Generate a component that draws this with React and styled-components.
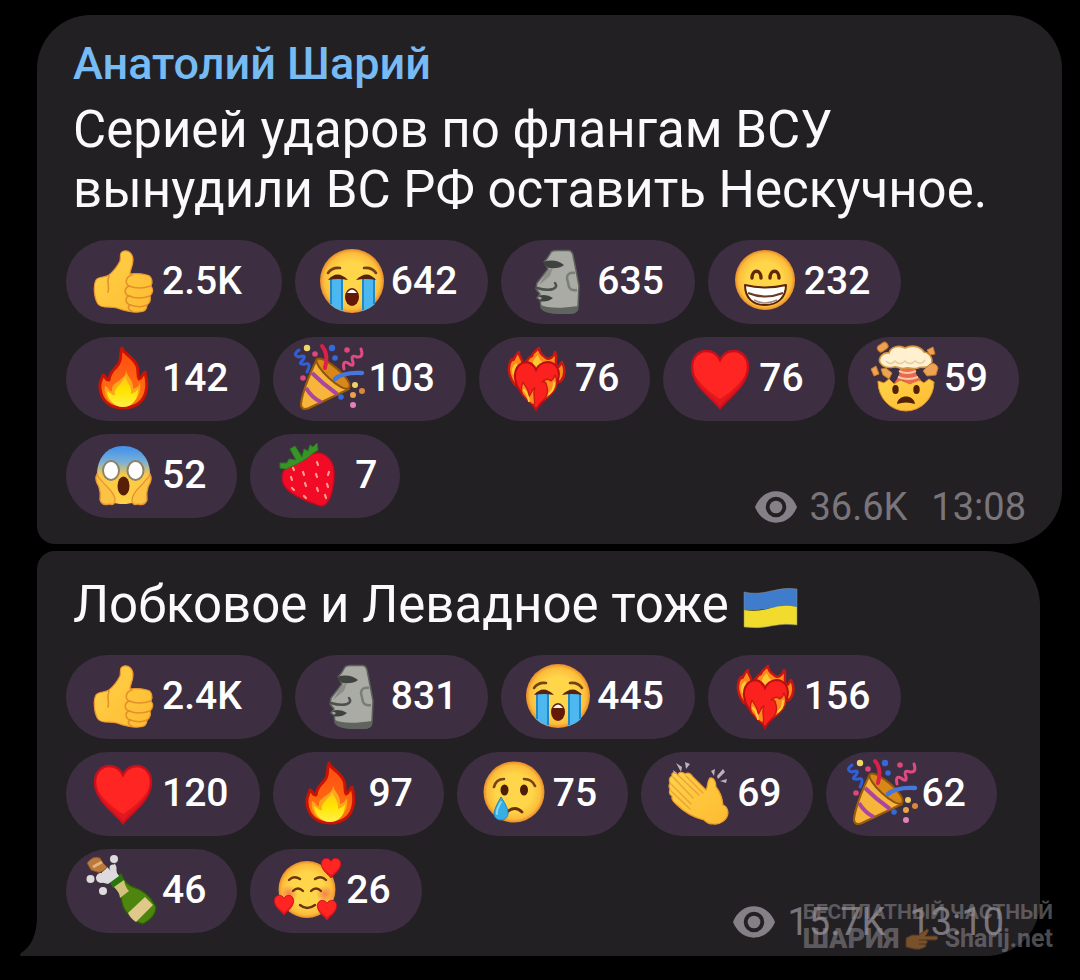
import React from 'react';
import styled, { createGlobalStyle } from 'styled-components';

const GlobalStyle = createGlobalStyle`
  body {
    margin: 0;
    background-color: #000;
    font-family: Roboto, 'Liberation Sans', sans-serif;
  }
`;

const Page = styled.main`
  position: relative;
  box-sizing: border-box;
  min-height: 100vh;
  padding: 15px 18px 24px 37px;
  display: flex;
  flex-direction: column;
  gap: 7px;
`;

const Bubble = styled.article`
  position: relative;
  background-color: #232024;
  padding: ${(props) => (props.$tail ? '24px 36px 11px 29px' : '23px 36px 14px 29px')};
  margin-right: ${(props) => (props.$tail ? '22px' : '0')};
  border-radius: ${(props) => (props.$tail ? '18px 54px 54px 0' : '54px 54px 54px 18px')};
`;

const Tail = styled.svg`
  position: absolute;
  left: -18px;
  bottom: 0;
  width: 19px;
  height: 40px;
`;

const Author = styled.h2`
  margin: 0 7px 10px;
  font-size: 45px;
  font-weight: 500;
  line-height: 52px;
  color: #76bbf3;
`;

const Message = styled.p`
  margin: 0 7px 20px;
  font-size: 51px;
  line-height: 60px;
  color: #fbf9fc;
`;

const FlagIcon = styled.svg`
  width: 58px;
  height: 44px;
  vertical-align: -8px;
`;

const Reactions = styled.div`
  display: flex;
  flex-wrap: wrap;
  gap: 13px;
`;

// abbreviated counts (2.5K) get a roomier right side, single digits a tighter one
const pillEnd = { short: '14px', normal: '31px', long: '40px' };

const Pill = styled.button`
  display: flex;
  align-items: center;
  height: 84px;
  padding: 0 ${(props) => pillEnd[props.$size]} 2px 0;
  border: none;
  border-radius: 42px;
  background-color: #3d2f41;
  color: #fff;
  font-family: inherit;
  font-size: 39px;
  font-weight: 500;
  cursor: pointer;
`;

const Count = styled.span`
  min-width: 40px;
  text-align: center;
`;

const Emoji = styled.svg`
  width: 96px;
  height: 84px;
  margin-bottom: -2px;
  flex: none;
`;

const Meta = styled.footer`
  display: flex;
  align-items: center;
  justify-content: flex-end;
  margin-top: -34px;
  font-size: 38px;
  line-height: 46px;
  color: #79757b;

  time {
    margin-left: 24px;
  }
`;

const EyeIcon = styled.svg`
  width: 42px;
  height: 32px;
  margin-right: 12px;
`;

const Watermark = styled.div`
  position: absolute;
  right: 27px;
  bottom: 27px;
  color: rgba(150, 148, 152, 0.5);
  font-weight: 700;
  font-size: 21px;
  line-height: 25px;
`;

const WatermarkLink = styled.a`
  display: flex;
  align-items: center;
  justify-content: space-between;
  color: inherit;
  text-decoration: none;
  font-size: 25px;
  line-height: 28px;

  strong {
    font-size: 27px;
  }
`;

const PointerIcon = styled.svg`
  width: 34px;
  height: 24px;
`;

// EMOJI PARTS
const Defs = () => (
  <svg width="0" height="0" style={{ position: 'absolute' }} aria-hidden="true">
    <defs>
      <radialGradient id="face">
        <stop offset="0.6" stopColor="#ffd54a" />
        <stop offset="0.88" stopColor="#fbbd3a" />
        <stop offset="1" stopColor="#e98a2c" />
      </radialGradient>
      <linearGradient id="scream" x1="0" y1="0" x2="0" y2="1">
        <stop offset="0.05" stopColor="#4795ea" />
        <stop offset="0.28" stopColor="#7db0d6" />
        <stop offset="0.5" stopColor="#fcc844" />
        <stop offset="1" stopColor="#ffd044" />
      </linearGradient>
      <linearGradient id="flame" x1="0" y1="0" x2="0" y2="1">
        <stop offset="0" stopColor="#ff4a12" />
        <stop offset="1" stopColor="#ff7a10" />
      </linearGradient>
      <linearGradient id="flameCore" x1="0" y1="0" x2="0" y2="1">
        <stop offset="0" stopColor="#ffc21c" />
        <stop offset="0.5" stopColor="#ffe500" />
        <stop offset="1" stopColor="#fff04a" />
      </linearGradient>
      <linearGradient id="hand" x1="0" y1="0" x2="1" y2="1">
        <stop offset="0" stopColor="#ffd24a" />
        <stop offset="1" stopColor="#fdbb30" />
      </linearGradient>
      <radialGradient id="blush">
        <stop offset="0" stopColor="#f5804a" />
        <stop offset="1" stopColor="#f5804a" stopOpacity="0" />
      </radialGradient>
    </defs>
  </svg>
);

const Heart = ({ x, y, size }) => (
  <g transform={`translate(${x} ${y}) scale(${size / 58})`}>
    <path
      d="M0 29C-6 20 -28 7 -28 -12C-28 -22 -21 -28 -14 -28C-8 -28 -3 -25 0 -19C3 -25 8 -28 14 -28C21 -28 28 -22 28 -12C28 7 6 20 0 29Z"
      fill="#ff2522"
      stroke="#c90f1c"
      strokeWidth="2.5"
    />
    <path d="M0 29C-8 19 -25 8 -27 -7C-20 6 -8 15 0 20C8 15 20 6 27 -7C25 8 8 19 0 29Z" fill="#d8141d" opacity="0.75" />
  </g>
);

const Thumb = () => (
  <>
    <path
      d="M58 11C63 10 67 14 67 20C67 26 64 30 64 34C70 33 77 34 81 35C86 36 87 42 85 46C88 50 86 54 84 56C85 60 84 63 81 65C81 70 78 72 73 72C65 73 57 70 51 68C44 66 36 69 32 64C28 58 27 45 30 40C33 36 39 38 43 35C49 30 52 25 54 21C55 17 53 12 58 11Z"
      fill="url(#hand)"
      stroke="#eb9530"
      strokeWidth="1.2"
    />
    <g fill="none" stroke="#e4902b" strokeWidth="1.6" strokeLinecap="round">
      <path d="M43 36C40 42 44 46 42 52" />
      <path d="M66 35C59 37 59 44 63 46C57 49 59 55 63 56C58 58 60 64 64 65C61 67 63 71 66 71" />
      <path d="M63 46C70 49 79 48 85 46M63 56C70 59 78 58 84 56M64 65C70 67 77 67 81 65" />
    </g>
  </>
);

const Sob = () => (
  <>
    <circle cx="57" cy="41" r="32" fill="url(#face)" />
    <path d="M35 38H48V71Q40 69 35 64ZM67 38H80V64Q75 69 67 71Z" fill="#4db7ef" />
    <path d="M36 38V64M47 38V70M68 38V70M79 38V64" stroke="#2387c4" strokeWidth="2" />
    <path d="M33 40Q42 29 53 40Q43 38 33 40ZM81 40Q72 29 61 40Q71 38 81 40Z" fill="#54240c" />
    <path d="M33 33Q37 27 45 28M81 33Q77 27 69 28" fill="none" stroke="#74400f" strokeWidth="2.6" strokeLinecap="round" />
    <ellipse cx="57" cy="57" rx="7" ry="9" fill="#641806" />
    <path d="M52 53Q57 46 62 53Z" fill="#fff" />
  </>
);

const Moai = () => (
  <>
    <path
      d="M50 12Q52 10 57 10.500H68Q71 11 72 15L75 30L78 46L77 67Q77 73 69 73H56Q41 72 40 67L39 60L36 58L39 54L35 49L36 43L47 29L43 22Q47 18 50 12Z"
      fill="#a9aba4"
      stroke="#5c605c"
      strokeWidth="1.500"
      strokeLinejoin="round"
    />
    <path d="M40 65Q50 70 77 66V68Q77 74 69 74H56Q42 73 40 67Z" fill="#60645f" />
    <path d="M42 22Q54 18 63 25Q58 29 48 28Q45 27 42 22Z" fill="#3e433f" />
    <path d="M46 31L52 28L49 36L38 45Z" fill="#8b8e87" />
    <path d="M36 48Q46 51 52 49Q57 47 54 43" fill="none" stroke="#4c514d" strokeWidth="2.500" strokeLinecap="round" />
    <path d="M37 56Q45 53 52 58Q46 63 38 61L41 58Z" fill="#3e433f" />
    <path d="M74 33Q66 32 66 38L68 47Q70 51 76 50" fill="none" stroke="#7a7e78" strokeWidth="2.500" />
  </>
);

const Grin = () => (
  <>
    <circle cx="57" cy="40" r="30" fill="url(#face)" />
    <path d="M44 38C44 29 53 29 53 38M62 38C62 29 71 29 71 38" fill="none" stroke="#612806" strokeWidth="3.400" strokeLinecap="round" />
    <path d="M37 45Q57 50 78 45C78 58 69 65 57 65C45 65 37 58 37 45Z" fill="#fff" stroke="#5a2508" strokeWidth="2" strokeLinejoin="round" />
    <path d="M40 53Q57 60 75 53" fill="none" stroke="#6b3b22" strokeWidth="2" />
    <path d="M46 60Q57 66 69 60" fill="none" stroke="#a58a80" strokeWidth="1.500" />
  </>
);

const Fire = () => (
  <>
    <path
      d="M56 11C56 16 67 19 71 29C73 34 71 39 73 42C77 40 76 37 79 35C80 40 82 46 80 54C78 64 70 71 57 71C43 71 35 63 34 51C33 46 36 42 37 38C40 39 39 43 43 43C44 35 47 34 51 29C57 23 53 16 56 11Z"
      fill="url(#flame)"
      stroke="#c91405"
      strokeWidth="3"
      strokeLinejoin="round"
    />
    <path
      d="M60 33C61 40 68 43 67 52C71 51 73 48 74 46C76 58 68 69 57 69C45 69 37 61 39 49C43 50 43 55 46 54C45 47 51 46 55 42C59 39 60 37 60 33Z"
      fill="#ffa51a"
    />
    <path d="M59 38C60 45 66 48 65 57C68 56 71 54 72 52C72 64 65 70 57 70C48 70 41 62 41 54C45 56 46 59 49 58C47 50 59 46 59 38Z" fill="url(#flameCore)" />
  </>
);

const Party = () => (
  <>
    <path d="M44 22Q30 51 28 67Q28 74 36 71L76 52Z" fill="#f8b53c" stroke="#9b5d0c" strokeWidth="2" strokeLinejoin="round" />
    <path d="M44 22C51 18 82 44 76 51C70 57 39 28 44 22Z" fill="#d98718" stroke="#8f560b" strokeWidth="2" />
    <path d="M39 36Q50 47 64 57M33 51Q39 61 48 65" fill="none" stroke="#a9479e" strokeWidth="4" />
    <path d="M49 9Q56 17 52 31" fill="none" stroke="#dd1f4a" strokeWidth="4" strokeLinecap="round" />
    <path d="M62 42Q70 35 89 36" fill="none" stroke="#4777dd" strokeWidth="4.500" strokeLinecap="round" />
    <path d="M26 13Q19 18 26 20Q34 17 30 23Q24 28 32 27Q39 25 34 35" fill="none" stroke="#315fd6" strokeWidth="3" strokeLinecap="round" />
    <path d="M88 12Q91 21 84 20Q77 17 80 25Q81 31 75 26Q69 23 71 32" fill="none" stroke="#df4a80" strokeWidth="3" strokeLinecap="round" />
    <circle cx="34" cy="11" r="3.200" fill="#f0d56b" />
    <circle cx="42" cy="17" r="2.800" fill="#df477a" />
    <circle cx="59" cy="11" r="3.200" fill="#3569dc" />
    <circle cx="62" cy="21" r="2.800" fill="#3569dc" />
    <circle cx="74" cy="13" r="2.800" fill="#df477a" />
    <circle cx="30" cy="41" r="2.800" fill="#df477a" />
    <circle cx="68" cy="60" r="2.800" fill="#3569dc" />
    <circle cx="82" cy="48" r="3" fill="#f0cf6b" />
    <circle cx="89" cy="54" r="3" fill="#dc853d" />
    <circle cx="80" cy="58" r="3" fill="#eba24b" />
    <circle cx="80" cy="68" r="3" fill="#e281bd" />
  </>
);

const HeartFire = () => (
  <>
    <path
      d="M36 48C29 39 28 29 33 22C35 26 35 18 40 15C39 20 45 22 43 28C49 26 48 20 53 19C54 15 58 13 60 11C60 16 64 19 67 21C70 23 75 20 76 15C79 20 75 25 78 29C81 31 80 28 83 25C85 29 88 36 82 44L58 54Z"
      fill="#ff8a1c"
      stroke="#c81711"
      strokeWidth="2.500"
      strokeLinejoin="round"
    />
    <path d="M34 38Q31 31 37 26Q40 29 38 37ZM54 28Q53 23 59 18Q60 23 65 26L61 31Z" fill="#ffc832" />
    <path
      d="M57 73C53 64 38 58 36 41C35 29 44 23 51 26Q55 28 57 33Q60 26 68 25C77 25 82 33 79 43C75 58 61 64 57 73Z"
      fill="#fb211e"
      stroke="#bb0f13"
      strokeWidth="2"
    />
    <path
      d="M44 45C47 51 51 53 49 60C53 58 52 52 56 51C53 57 57 62 55 68Q49 65 46 60Q40 55 44 45ZM76 38Q80 47 75 54Q70 60 65 63Q70 56 68 50Q67 43 63 45Q68 40 72 44Q75 42 76 38Z"
      fill="#ff8a1e"
      stroke="#c91a10"
      strokeWidth="1.300"
      strokeLinejoin="round"
    />
    <path d="M45 53Q49 57 50 64M75 46Q75 53 70 57" fill="none" stroke="#ffcf3e" strokeWidth="2" strokeLinecap="round" />
  </>
);

const RedHeart = () => <Heart x={57} y={42} size={58} />;

const Exploding = () => (
  <>
    <path d="M30 44L36 46L41 42L46 47L52 43L62 47L70 42L76 46L81 42L86 45A28 29 0 0 1 30 45Z" fill="url(#hand)" stroke="#df922f" />
    <path d="M51 28H68Q65 36 73 43L62 47L54 43L46 46Q54 37 51 28Z" fill="#e76b4c" />
    <path d="M51 34Q59 38 68 34M50 40Q60 44 70 40" fill="none" stroke="#ffc6a5" strokeWidth="2" />
    <path
      d="M34 28C28 23 34 15 41 16C43 9 52 8 57 11C65 7 73 10 76 15C83 16 87 25 81 29C77 32 73 29 70 31C65 33 62 30 58 31C53 33 50 29 46 30C41 31 37 31 34 28Z"
      fill="#fff0cf"
      stroke="#d5953e"
      strokeWidth="1.600"
    />
    <path d="M38 24Q43 29 47 24Q52 29 57 24Q62 29 67 24Q73 29 77 23" fill="none" stroke="#e6cca0" strokeWidth="1.500" />
    <g fill="#eea352" stroke="#c87928">
      <rect x="29" y="7" width="11" height="7" rx="3" transform="rotate(-35 34 10)" />
      <path d="M79 13L85 10L87 17L82 18ZM23 32L28 29L31 37L26 39ZM33 32L38 31L44 36L41 42L35 38ZM75 34L82 27Q88 25 90 31L88 38L79 39Z" />
    </g>
    <ellipse cx="47.500" cy="52.500" rx="3.200" ry="4.500" fill="#512207" />
    <ellipse cx="68.500" cy="52.500" rx="3.200" ry="4.500" fill="#512207" />
    <path d="M49 67C50 57 66 57 67 67Q58 64 49 67Z" fill="#512207" />
  </>
);

const Scream = () => (
  <>
    <path d="M57 12C74 12 84 24 84 41C84 60 74 70 57 70C40 70 31 60 31 41C31 24 41 12 57 12Z" fill="url(#scream)" />
    <ellipse cx="45" cy="36.500" rx="8" ry="9.500" fill="#fff" stroke="#8c8466" strokeWidth="2" />
    <ellipse cx="69.500" cy="36.500" rx="8" ry="9.500" fill="#fff" stroke="#8c8466" strokeWidth="2" />
    <ellipse cx="57.500" cy="52" rx="6" ry="9.500" fill="#572006" />
    <path
      d="M31 40Q28 45 33 53Q35 59 34 66Q36 72 43 70Q49 72 49 66C49 58 40 53 36 47Q32 44 31 40ZM84 40Q87 45 82 53Q80 59 81 66Q79 72 72 70Q66 72 66 66C66 58 75 53 79 47Q83 44 84 40Z"
      fill="#fcc242"
      stroke="#e59436"
      strokeWidth="1.300"
    />
  </>
);

const Strawberry = () => (
  <>
    <path
      d="M66 19C75 18 84 26 84 38C85 51 81 65 76 70Q72 74 65 70C54 67 41 60 36 54C30 47 31 37 38 32C48 27 56 20 66 19Z"
      fill="#f10b26"
      stroke="#b90d20"
      strokeWidth="1.300"
    />
    <path
      d="M40 15L45 12L52 23L54 15L58 17L60 11L63 13L67 9L68 16L62 20Q58 24 54 26L47 30L36 35L30 34L30 29L37 29L39 25L46 26Z"
      fill="#399427"
      stroke="#287a22"
      strokeLinejoin="round"
    />
    <path
      d="M41 43L42 46M42 54L44 56M53 38L54 41M55 49L56 52M54 62L56 64M67 28L68 31M66 40L67 43M67 54L68 57M79 38L78 41M77 50L78 53M75 61L76 64M43 34L44 36"
      stroke="#ffa08c"
      strokeWidth="2.200"
      strokeLinecap="round"
    />
  </>
);

const Cry = () => (
  <>
    <circle cx="57" cy="40" r="30.500" fill="url(#face)" />
    <path d="M37 35Q39 27 47 27M67 27Q75 27 78 34" fill="none" stroke="#79430f" strokeWidth="2.600" strokeLinecap="round" />
    <ellipse cx="47.500" cy="38" rx="4" ry="5.500" fill="#4d1d08" />
    <ellipse cx="67" cy="38" rx="4" ry="5.500" fill="#4d1d08" />
    <path d="M50 60Q58 53 65 60" fill="none" stroke="#67300b" strokeWidth="2.800" strokeLinecap="round" />
    <path d="M44 45Q52 57 51 62C50 70 38 70 37 62Q37 57 44 45Z" fill="#38afe4" stroke="#2588bf" />
    <path d="M44 50Q39 58 40 62" fill="none" stroke="#83daf5" strokeWidth="2" strokeLinecap="round" />
  </>
);

const Clap = () => (
  <>
    <path
      d="M31 24C30 20 34 20 37 23C38 19 42 20 44 22C47 20 50 22 52 25L65 38C67 35 66 29 69 26C73 25 75 30 75 35Q81 42 82 53Q86 54 87 60C87 68 79 73 72 72Q67 72 63 68C51 65 41 58 35 52Q30 48 31 44Q27 42 29 37Q27 34 29 31Q27 26 31 24Z"
      fill="url(#hand)"
      stroke="#eb9a2f"
      strokeWidth="1.200"
    />
    <path d="M32 25L52 46M38 24L58 43M45 24L62 41M30 32L50 52M30 39L49 57" stroke="#eaa238" strokeWidth="1.300" strokeLinecap="round" />
    <path d="M32 18L36 21L33 22ZM35 11L41 15L40 20ZM44 10L49 12L45 17ZM70 19L74 17L73 24ZM82 17L84 20L77 27L76 24ZM79 29L86 27L85 31Z" fill="#bbb2bf" />
  </>
);

const Champagne = () => (
  <>
    <path d="M43 31L55 25Q59 36 70 39Q78 42 85 50L90 58Q90 68 77 75Q68 73 62 65Q56 59 55 48Q53 39 43 31Z" fill="#4d850e" stroke="#2c5c0b" strokeWidth="1.300" />
    <path d="M55 25L43 32L47 39L58 31Z" fill="#2a740e" />
    <path d="M48 38L58 31Q59 38 63 42L54 49Q54 44 48 38Z" fill="#d4c17c" />
    <path d="M62 64L79 48L87 56L70 73Q65 70 62 64Z" fill="#dfc889" />
    <g fill="#dedbdf">
      <path d="M36 22L41 18L45 22L49 14L51 24L53 27L42 35L34 33L30 28L36 28Z" />
      <circle cx="48" cy="10" r="4" />
      <circle cx="24.500" cy="30" r="4" />
      <circle cx="37" cy="42" r="4" />
      <circle cx="35" cy="29" r="5" />
      <circle cx="47" cy="19" r="3.500" />
    </g>
    <path d="M21 14Q27 6 34 9L37 14L41 18Q36 25 31 23L25 21Z" fill="#b9793f" stroke="#875121" />
    <path d="M27 18L36 13" stroke="#e3b477" strokeWidth="3" />
  </>
);

const Smitten = () => (
  <>
    <circle cx="57" cy="40.500" r="28.500" fill="url(#face)" />
    <circle cx="39" cy="45" r="9" fill="url(#blush)" />
    <circle cx="75" cy="45" r="9" fill="url(#blush)" />
    <path
      d="M39 31Q44 26 50 30M65 30Q71 26 76 31M43 42Q48 37 53 42M61 42Q66 37 71 42M50 56Q57 62 65 56"
      fill="none"
      stroke="#68350d"
      strokeWidth="2.400"
      strokeLinecap="round"
    />
    <Heart x={81} y={19} size={20} />
    <Heart x={34} y={56} size={20} />
    <Heart x={77} y={61} size={20} />
  </>
);

const emojis = {
  'thumbs up': Thumb,
  sob: Sob,
  moai: Moai,
  grin: Grin,
  fire: Fire,
  party: Party,
  'heart on fire': HeartFire,
  heart: RedHeart,
  'exploding head': Exploding,
  scream: Scream,
  strawberry: Strawberry,
  cry: Cry,
  clap: Clap,
  champagne: Champagne,
  smitten: Smitten,
};

const firstReactions = [
  ['thumbs up', '2.5K'],
  ['sob', '642'],
  ['moai', '635'],
  ['grin', '232'],
  ['fire', '142'],
  ['party', '103'],
  ['heart on fire', '76'],
  ['heart', '76'],
  ['exploding head', '59'],
  ['scream', '52'],
  ['strawberry', '7'],
];

const secondReactions = [
  ['thumbs up', '2.4K'],
  ['moai', '831'],
  ['sob', '445'],
  ['heart on fire', '156'],
  ['heart', '120'],
  ['fire', '97'],
  ['cry', '75'],
  ['clap', '69'],
  ['party', '62'],
  ['champagne', '46'],
  ['smitten', '26'],
];

const getSize = (count) => {
  if (count.length === 1) return 'short';
  return count.length > 3 ? 'long' : 'normal';
};

const ReactionList = ({ items }) => (
  <Reactions>
    {items.map(([name, count]) => {
      const Drawing = emojis[name];
      return (
        <Pill key={name} type="button" $size={getSize(count)}>
          <Emoji viewBox="0 0 96 84" aria-hidden="true">
            <Drawing />
          </Emoji>
          <Count>{count}</Count>
        </Pill>
      );
    })}
  </Reactions>
);

const Views = ({ count, time }) => (
  <Meta>
    <EyeIcon viewBox="0 0 43 32" aria-hidden="true">
      <path
        d="M21.500 0C12 0 4 6 0 16C4 26 12 32 21.500 32S39 26 43 16C39 6 31 0 21.500 0ZM21.500 5.500A10.500 10.500 0 1 1 21.500 26.500A10.500 10.500 0 0 1 21.500 5.500Z"
        fill="#858087"
        fillRule="evenodd"
      />
      <circle cx="21.500" cy="16" r="6.500" fill="#858087" />
    </EyeIcon>
    <span>{count}</span>
    <time>{time}</time>
  </Meta>
);

const Flag = () => (
  <FlagIcon viewBox="0 0 58 44" aria-hidden="true">
    <path d="M3 6Q16 9 30 5T56 3V21Q43 19 30 22T3 24Z" fill="#3f7dcc" />
    <path d="M3 24Q16 26 30 22T56 21V39Q43 37 30 40T3 41Z" fill="#f1db2d" />
    <path d="M3 6Q16 9 30 5T56 3V39Q43 37 30 40T3 41Z" fill="none" stroke="#8e9187" strokeOpacity="0.5" />
  </FlagIcon>
);

const App = () => (
  <>
    <GlobalStyle />
    <Defs />
    <Page>
      {/* MESSAGE 1 */}
      <Bubble>
        <Author>Анатолий Шарий</Author>
        <Message>Серией ударов по флангам ВСУ вынудили ВС РФ оставить Нескучное.</Message>
        <ReactionList items={firstReactions} />
        <Views count="36.6K" time="13:08" />
      </Bubble>

      {/* MESSAGE 2 */}
      <Bubble $tail>
        <Tail viewBox="0 0 19 40" aria-hidden="true">
          <path d="M18 0C18 19 12 31 2 37Q0 39 2 40H19V0Z" fill="#232024" />
        </Tail>
        <Message>
          Лобковое и Левадное тоже <Flag />
        </Message>
        <ReactionList items={secondReactions} />
        <Views count="15.7K" time="13:10" />
      </Bubble>

      <Watermark>
        БЕСПЛАТНЫЙ ЧАСТНЫЙ
        <WatermarkLink href="#sharij">
          <strong>ШАРИЯ</strong>
          <PointerIcon viewBox="0 0 34 24" aria-hidden="true">
            <path
              d="M1 11L7 8H14L22 2Q25 2 22 7L20 9H32Q34 12 31 13H21Q24 15 21 17Q22 20 18 21Q15 23 9 22L1 20Z"
              fill="#78512b"
              stroke="#4c3522"
            />
            <path d="M14 13H22M14 17H21" stroke="#4c3522" />
          </PointerIcon>
          <span>Sharij.net</span>
        </WatermarkLink>
      </Watermark>
    </Page>
  </>
);

export default App;
